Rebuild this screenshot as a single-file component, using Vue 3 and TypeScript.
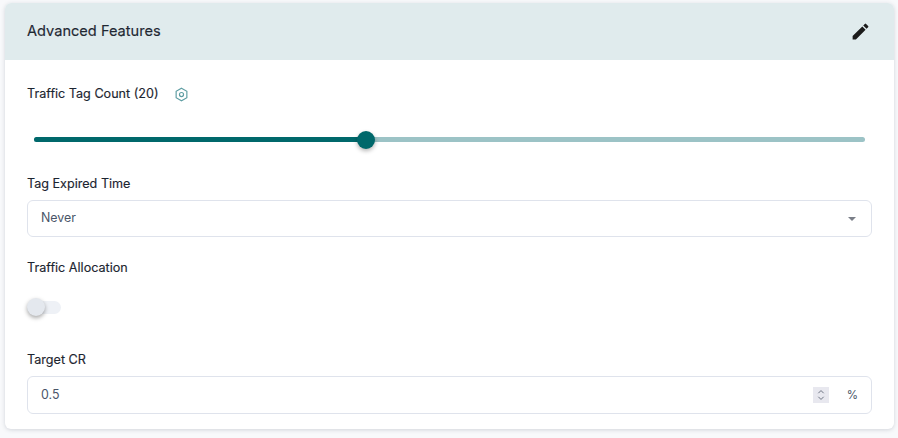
<script setup lang="ts">
import { ref } from 'vue'

const tagCount = ref(20)
const trackPercent = ref(40)
const expiredTime = ref('Never')
const targetCr = ref('0.5')
</script>

<template>
  <div class="page">
    <section class="card">
      <header class="card-header">
        <h2 class="card-title">Advanced Features</h2>
        <svg class="edit-icon" viewBox="0 0 24 24" aria-hidden="true">
          <path d="M3 17.25V21h3.75L17.81 9.94l-3.75-3.75L3 17.25zM20.71 7.04a1 1 0 0 0 0-1.41l-2.34-2.34a1 1 0 0 0-1.41 0l-1.83 1.83 3.75 3.75 1.83-1.83z" />
        </svg>
      </header>

      <div class="card-body">
        <div class="count-label">
          <span class="label">Traffic Tag Count ({{ tagCount }})</span>
          <svg class="hex-icon" viewBox="0 0 14 14" aria-hidden="true">
            <path d="M7 1.2 12 4v6l-5 2.8L2 10V4z" />
            <circle cx="7" cy="7" r="1.9" />
          </svg>
        </div>

        <div class="slider">
          <div class="slider-track">
            <div class="slider-fill" :style="{ width: trackPercent + '%' }">
              <span class="slider-thumb"></span>
            </div>
          </div>
        </div>

        <label class="label expired-label">Tag Expired Time</label>
        <div class="field select-field">
          <span class="field-value">{{ expiredTime }}</span>
          <span class="caret"></span>
        </div>

        <label class="label allocation-label">Traffic Allocation</label>
        <div class="switch">
          <span class="switch-knob"></span>
        </div>

        <label class="label">Target CR</label>
        <div class="field number-field">
          <span class="field-value">{{ targetCr }}</span>
          <div class="number-end">
            <span class="spinner">
              <svg viewBox="0 0 16 18" aria-hidden="true">
                <path d="M5 7l3-3 3 3M5 11l3 3 3-3" />
              </svg>
            </span>
            <span class="unit">%</span>
          </div>
        </div>
      </div>
    </section>
  </div>
</template>

<style>
html,
body {
  margin: 0;
  background: #f8f9fb;
}
</style>

<style scoped>
.page {
  height: 438px;
  box-sizing: border-box;
  padding: 3px 4px 0 5px;
  font-family: Inter, "Open Sans", sans-serif;
  overflow: hidden;
}

.card {
  height: 426px;
  background: #fff;
  border-radius: 6px;
  box-shadow: 0 1px 4px rgba(60, 70, 90, 0.2);
  overflow: hidden;
}

.card-header {
  height: 57px;
  display: flex;
  align-items: center;
  justify-content: space-between;
  padding: 0 23px 0 22px;
  background: #e0ebed;
}

.card-title {
  margin: 0 0 2px;
  font-size: 14.6px;
  font-weight: 400;
  color: #1f2833;
  -webkit-text-stroke: 0.15px #1f2833;
}

.edit-icon {
  width: 21px;
  height: 21px;
  fill: #1b1b1b;
}

.card-body {
  padding: 0 22px;
}

.label {
  display: block;
  font-size: 12.6px;
  font-weight: 400;
  line-height: 18px;
  color: #1c2530;
  -webkit-text-stroke: 0.15px #1c2530;
}

.count-label {
  display: flex;
  align-items: center;
  gap: 15px;
  height: 18px;
  margin-top: 25px;
}

.hex-icon {
  width: 15px;
  height: 15px;
  fill: none;
  stroke: #5f9ea3;
  stroke-width: 1.1;
}

.slider {
  padding: 34px 7px 0;
}

.slider-track {
  height: 5px;
  border-radius: 3px;
  background: #9cc3c6;
}

.slider-fill {
  position: relative;
  height: 100%;
  border-radius: 3px;
  background: #00686b;
}

.slider-thumb {
  position: absolute;
  top: -6.5px;
  right: -9px;
  width: 18px;
  height: 18px;
  border-radius: 50%;
  background: #00686b;
  box-shadow: 0 2px 4px rgba(0, 0, 0, 0.3);
}

.expired-label {
  margin-top: 33px;
}

.field {
  display: flex;
  align-items: center;
  justify-content: space-between;
  box-sizing: border-box;
  height: 37px;
  margin-top: 7px;
  padding: 0 14px 0 13px;
  border: 1px solid #dfe3ec;
  border-radius: 6px;
  font-size: 12.4px;
  color: #4a5568;
}

.field-value {
  padding-bottom: 2px;
}

.caret {
  width: 0;
  height: 0;
  margin-right: 1px;
  border-left: 4.5px solid transparent;
  border-right: 4.5px solid transparent;
  border-top: 4.5px solid #7a7f88;
}

.allocation-label {
  margin-top: 22px;
}

.switch {
  position: relative;
  width: 34px;
  height: 13px;
  margin: 24px 0 37px;
  border-radius: 7px;
  background: #eef1f6;
}

.switch-knob {
  position: absolute;
  top: -3px;
  left: 0;
  width: 18px;
  height: 18px;
  border-radius: 50%;
  background: #e4e8ee;
  box-shadow: 0 2px 4px rgba(0, 0, 0, 0.35);
}

.number-field {
  height: 38px;
  padding-right: 13px;
}

.number-end {
  display: flex;
  align-items: center;
  gap: 18px;
}

.spinner {
  display: flex;
  width: 16px;
  height: 16px;
  background: #e8e8ef;
}

.spinner svg {
  width: 16px;
  height: 16px;
  fill: none;
  stroke: #6b7280;
  stroke-width: 1.1;
}

.unit {
  font-size: 11.5px;
}
</style>
